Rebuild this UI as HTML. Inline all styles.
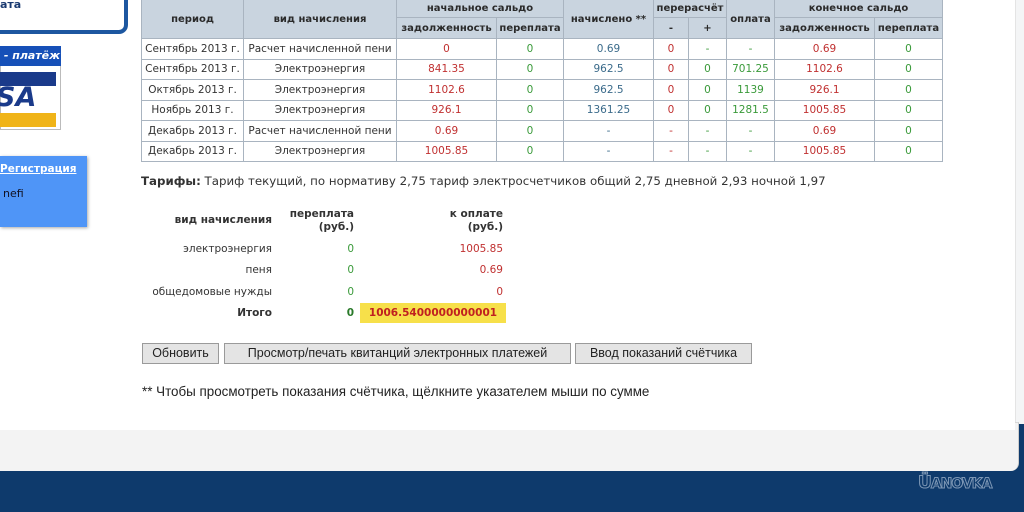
<!DOCTYPE html>
<html><head><meta charset="utf-8"><style>
body{margin:0;width:1024px;height:512px;overflow:hidden;background:#fff;font-family:"DejaVu Sans","Liberation Sans",sans-serif;position:relative}
.abs{position:absolute}
table.t{position:absolute;left:141px;top:-1px;border-collapse:collapse;font-size:10.5px;table-layout:fixed}
.t td,.t th{border:1px solid #a9b4c0;text-align:center;padding:0;height:19.5px;white-space:nowrap;color:#333}
.t th{background:#c9d4df;color:#2a2a2a;font-weight:bold;font-size:10px}
.t tr.h1 th{height:17px}
.t tr.h2 th{height:20px}
.s{position:absolute;font-size:10.5px;color:#333}
.r,.t td.r,.s.r{color:#c03030}.g,.t td.g,.s.g{color:#3a9a3a}.b,.t td.b{color:#3a6a8a}
.btn{position:absolute;top:343px;height:19px;border:1px solid #9a9a9a;background:#e4e4e4;font-family:"Liberation Sans",sans-serif;font-size:12.5px;line-height:19px;text-align:center;color:#222}
</style></head><body>
<div class="abs" style="left:-10px;top:-10px;width:130px;height:36px;border:4px solid #1d57a0;border-radius:9px;background:#fff"></div>
<div class="abs" style="left:0;top:-2px;font-size:11px;color:#1a3a70;font-weight:bold">ата</div>
<div class="abs" style="left:0;top:46px;width:61px;height:84px;background:#fff;border:1px solid #bbb;box-sizing:border-box"></div>
<div class="abs" style="left:0;top:46px;width:61px;height:20px;background:#1650b8;color:#fff;font-style:italic;font-weight:bold;font-size:11px;line-height:20px">&nbsp;- платёж</div>
<div class="abs" style="left:0;top:72px;width:56px;height:14px;background:#1a3a8a"></div>
<div class="abs" style="left:-4px;top:84px;font-size:27px;font-weight:bold;font-style:italic;color:#1a3a8a;line-height:28px">SA</div>
<div class="abs" style="left:0;top:113px;width:56px;height:14px;background:#f0b418"></div>
<div class="abs" style="left:0;top:156px;width:87px;height:71px;background:#4f95f7;box-shadow:1px 1px 3px #aaa"></div>
<div class="abs" style="left:0;top:163px;font-size:10.5px;color:#fff;font-weight:bold;text-decoration:underline">Регистрация</div>
<div class="abs" style="left:3px;top:187px;font-size:11px;color:#112">nefi</div>
<div class="abs" style="left:1015px;top:0;width:9px;height:432px;background:#f4f5f6;border-left:1px solid #e4e4e4"></div>

<table class="t">
<colgroup><col style="width:102px"><col style="width:153px"><col style="width:100px"><col style="width:67px"><col style="width:90px"><col style="width:35px"><col style="width:38px"><col style="width:48px"><col style="width:100px"><col style="width:68px"></colgroup>
<tr class="h1"><th rowspan="2">период</th><th rowspan="2">вид начисления</th><th colspan="2">начальное сальдо</th><th rowspan="2">начислено **</th><th colspan="2">перерасчёт</th><th rowspan="2">оплата</th><th colspan="2">конечное сальдо</th></tr>
<tr class="h2"><th>задолженность</th><th>переплата</th><th>-</th><th>+</th><th>задолженность</th><th>переплата</th></tr>
<tr><td>Сентябрь 2013 г.</td><td>Расчет начисленной пени</td><td class="r">0</td><td class="g">0</td><td class="b">0.69</td><td class="r">0</td><td class="g">-</td><td class="g">-</td><td class="r">0.69</td><td class="g">0</td></tr>
<tr><td>Сентябрь 2013 г.</td><td>Электроэнергия</td><td class="r">841.35</td><td class="g">0</td><td class="b">962.5</td><td class="r">0</td><td class="g">0</td><td class="g">701.25</td><td class="r">1102.6</td><td class="g">0</td></tr>
<tr><td>Октябрь 2013 г.</td><td>Электроэнергия</td><td class="r">1102.6</td><td class="g">0</td><td class="b">962.5</td><td class="r">0</td><td class="g">0</td><td class="g">1139</td><td class="r">926.1</td><td class="g">0</td></tr>
<tr><td>Ноябрь 2013 г.</td><td>Электроэнергия</td><td class="r">926.1</td><td class="g">0</td><td class="b">1361.25</td><td class="r">0</td><td class="g">0</td><td class="g">1281.5</td><td class="r">1005.85</td><td class="g">0</td></tr>
<tr><td>Декабрь 2013 г.</td><td>Расчет начисленной пени</td><td class="r">0.69</td><td class="g">0</td><td class="b">-</td><td class="r">-</td><td class="g">-</td><td class="g">-</td><td class="r">0.69</td><td class="g">0</td></tr>
<tr><td>Декабрь 2013 г.</td><td>Электроэнергия</td><td class="r">1005.85</td><td class="g">0</td><td class="b">-</td><td class="r">-</td><td class="g">-</td><td class="g">-</td><td class="r">1005.85</td><td class="g">0</td></tr>
</table>

<div class="s" style="left:141px;top:174px;font-size:11.8px"><b>Тарифы:</b> Тариф текущий, по нормативу 2,75 тариф электросчетчиков общий 2,75 дневной 2,93 ночной 1,97</div>

<div class="s" style="left:150px;top:214px;width:122px;text-align:right;font-weight:bold;font-size:10.5px">вид начисления</div>
<div class="s" style="left:270px;top:208px;width:84px;text-align:right;font-weight:bold;font-size:10.5px;line-height:13px">переплата<br>(руб.)</div>
<div class="s" style="left:400px;top:208px;width:103px;text-align:right;font-weight:bold;font-size:10.5px;line-height:13px">к оплате<br>(руб.)</div>
<div class="s" style="left:150px;top:243px;width:122px;text-align:right">электроэнергия</div>
<div class="s g" style="left:280px;top:243px;width:74px;text-align:right">0</div>
<div class="s r" style="left:400px;top:243px;width:103px;text-align:right">1005.85</div>
<div class="s" style="left:150px;top:264px;width:122px;text-align:right">пеня</div>
<div class="s g" style="left:280px;top:264px;width:74px;text-align:right">0</div>
<div class="s r" style="left:400px;top:264px;width:103px;text-align:right">0.69</div>
<div class="s" style="left:100px;top:286px;width:172px;text-align:right">общедомовые нужды</div>
<div class="s g" style="left:280px;top:286px;width:74px;text-align:right">0</div>
<div class="s r" style="left:400px;top:286px;width:103px;text-align:right">0</div>
<div class="s" style="left:150px;top:307px;width:122px;text-align:right;font-weight:bold">Итого</div>
<div class="s" style="left:280px;top:307px;width:74px;text-align:right;font-weight:bold;color:#2a7a2a">0</div>
<div class="abs" style="left:360px;top:303px;width:146px;height:20px;background:#f7e04a;color:#c02020;font-weight:bold;font-size:10.5px;line-height:20px;text-align:center">1006.5400000000001</div>

<div class="btn" style="left:142px;width:75px">Обновить</div>
<div class="btn" style="left:224px;width:345px">Просмотр/печать квитанций электронных платежей</div>
<div class="btn" style="left:575px;width:175px">Ввод показаний счётчика</div>
<div class="abs" style="left:142px;top:384px;font-family:'Liberation Sans',sans-serif;font-size:13.4px;color:#222">** Чтобы просмотреть показания счётчика, щёлкните указателем мыши по сумме</div>

<div class="abs" style="left:0;top:424px;width:1024px;height:88px;background:#0e3a6c"></div>
<div class="abs" style="left:0;top:422px;width:1018px;height:48px;background:#f3f3f3;border-top:1px solid #d8d8d8;border-bottom-right-radius:8px;border-right:1px solid #ccc"></div>
<div class="abs" style="left:0;top:422px;width:1015px;height:8px;background:#fff"></div>
<div class="abs" style="left:918px;top:473px;font-size:17px;font-weight:bold;color:#0e3a6c;-webkit-text-stroke:1px #7d97b5;letter-spacing:-1px">Ü<span style="font-size:14px">ANOVKA</span></div>
</body></html>
